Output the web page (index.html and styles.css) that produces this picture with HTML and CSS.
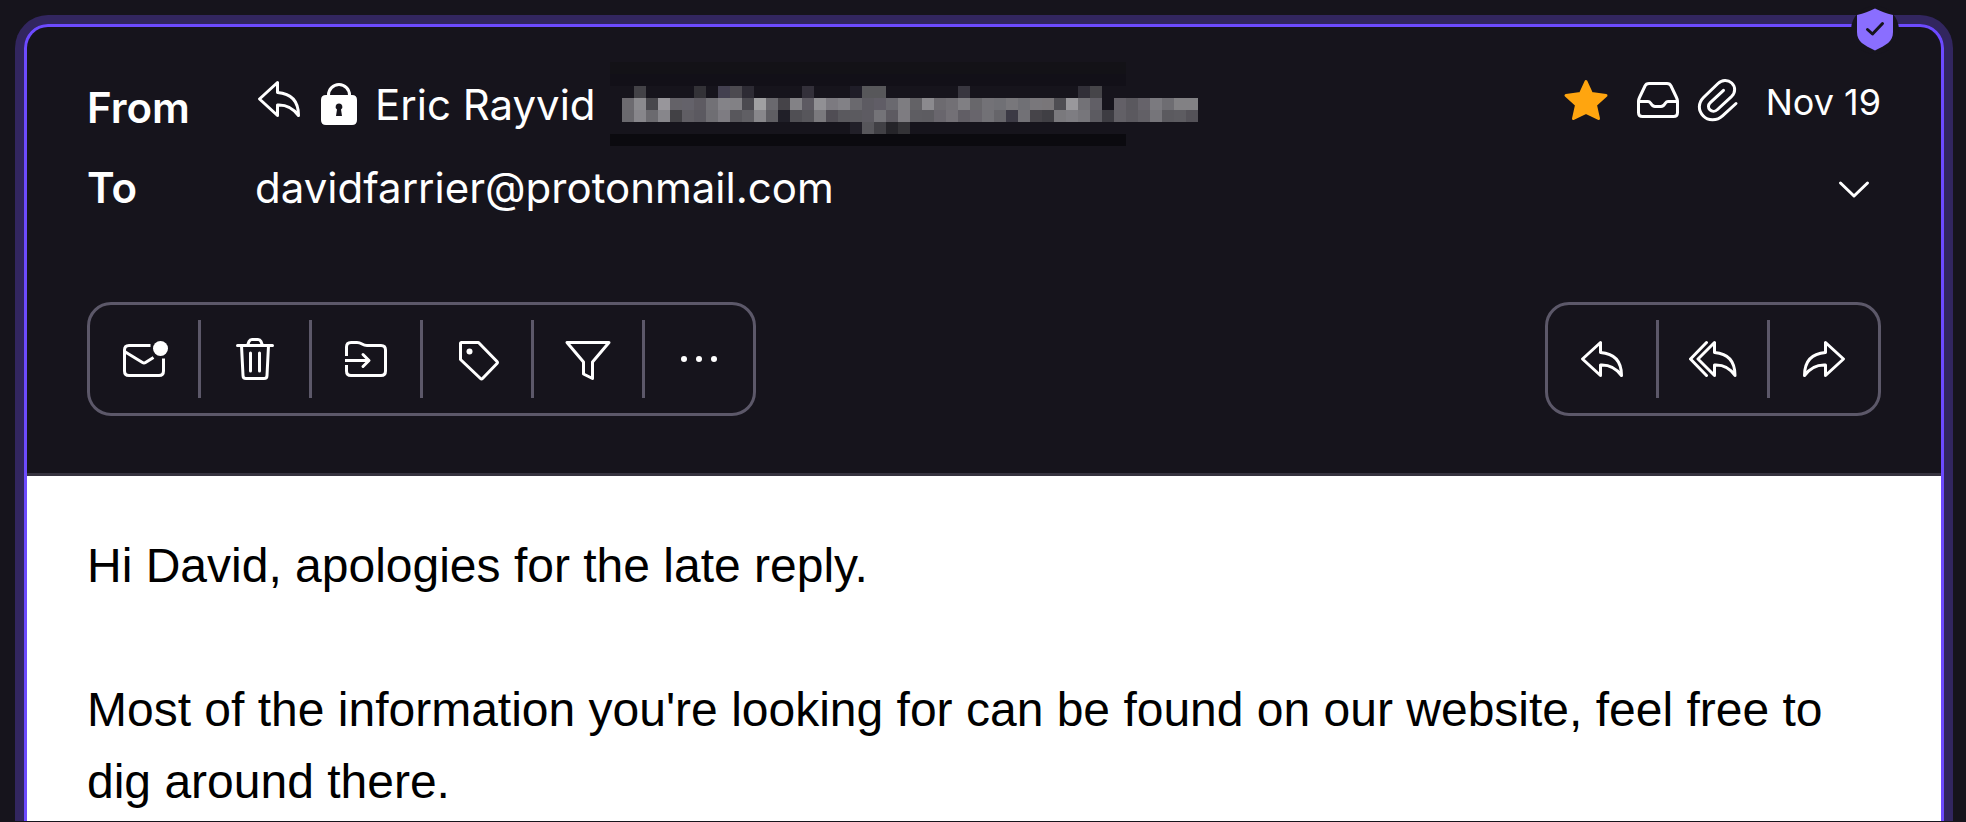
FILE: index.html
```html
<!DOCTYPE html>
<html lang="en">
<head>
<meta charset="utf-8">
<title>Message</title>
<link rel="stylesheet" href="styles.css">
</head>

<body>
<svg class="symbols" aria-hidden="true">
  <symbol id="reply" viewBox="0 0 48 48">
    <path d="M4.5 24 22.5 7.5V17.5C36 18.5 43.5 26 43.5 40.5 38 33 32 29.5 22.5 30v10.5z"/>
  </symbol>
</svg>

<main class="page">
<article class="message">
  <span class="shield">
    <svg viewBox="0 0 48 48" role="img" aria-label="Verified">
      <path class="shield-body" d="M24 2.5C30 5.5 35 7.5 42 9V26C42 36 35 39 24 44.5 13 39 6 36 6 26V9C13 7.5 18 5.5 24 2.5z"/>
      <path class="shield-check" d="M16.5 23.5l5 4.5 10-10.5"/>
    </svg>
  </span>

  <header class="head">
    <div class="row">
      <span class="label">From</span>
      <div class="sender">
        <svg class="icon replied"><use href="#reply"/></svg>
        <svg class="icon" viewBox="0 0 48 48">
          <path d="M13.5 16.5V15a10.5 10.5 0 0 1 21 0v1.5"/>
          <path class="solid" fill-rule="evenodd" d="M11 15H37Q42 15 42 20V40Q42 45 37 45H11Q6 45 6 40V20Q6 15 11 15zM24 23.5a3.3 3.3 0 0 0-2 6L21 36h6l-1-6.5a3.3 3.3 0 0 0-2-6z"/>
        </svg>
        <span class="name">Eric Rayvid</span>
        <svg class="redacted" id="redacted" viewBox="0 0 49 7" aria-hidden="true"></svg>
      </div>
      <div class="meta">
        <button class="plain star" type="button" aria-label="Starred">
          <svg class="icon" viewBox="0 0 48 48"><path d="M24 5.5 29.5 17.5 44 19.5 33.5 29 36.5 42.5 24 36.5 11.5 42.5 14.5 29 4 19.5 18.5 17.5z"/></svg>
        </button>
        <svg class="icon" viewBox="0 0 48 48">
          <path d="M4.5 25.5V36.5Q4.5 40.5 8.5 40.5H39.5Q43.5 40.5 43.5 36.5V25.5Q43.5 23.5 42.5 21.5L37 10Q36 7.5 33 7.5H15Q12 7.5 11 10L5.5 21.5Q4.5 23.5 4.5 25.5z"/>
          <path d="M4.5 25.5H14Q15.5 25.5 16.5 27 18.5 30.5 21 30.5H27Q29.5 30.5 31.5 27 32.5 25.5 34 25.5H43.5"/>
        </svg>
        <svg class="icon" viewBox="0 0 48 48">
          <path d="M42 27.5 28.5 39.8C23 45 14 45 9.3 40 4 34.5 4 27 9.5 21.5L24 7.5C28 3.5 34 3.5 37.7 7 41.7 10.8 41.5 16.5 37.7 20.3L23.5 33.5C21.1 35.8 18 35.8 16 33.9 13.8 31.8 14 28.9 16.3 26.7L29.5 14.3"/>
        </svg>
        <time class="date">Nov 19</time>
      </div>
    </div>

    <div class="row to">
      <span class="label">To</span>
      <span class="address">davidfarrier@protonmail.com</span>
      <button class="plain details" type="button" aria-label="Show details">
        <svg class="icon" viewBox="0 0 48 48"><path d="M10.5 19 24 32 37.5 19"/></svg>
      </button>
    </div>

    <div class="toolbar">
      <div class="group">
        <button type="button" aria-label="Mark as unread">
          <svg class="icon" viewBox="0 0 48 48">
            <path class="flat" d="M30.5 10.5H9Q4.5 10.5 4.5 15V36Q4.5 40.5 9 40.5H39Q43.5 40.5 43.5 36V23.5M4.5 16.5 22.5 27.5Q24 28.5 25.5 27.5L33.5 22.5"/>
            <circle class="solid" cx="40.5" cy="13.5" r="7.5"/>
          </svg>
        </button>
        <button type="button" aria-label="Move to trash">
          <svg class="icon" viewBox="0 0 48 48">
            <path d="M6.5 10.5H41.5M16.5 10.5 18 6.5Q19 4.5 21 4.5H27Q29 4.5 30 6.5L31.5 10.5M10.5 10.5 12 40.5Q12 43.5 15 43.5H33Q36 43.5 36 40.5L37.5 10.5M19.5 18V36M28.5 18V36"/>
          </svg>
        </button>
        <button type="button" aria-label="Move to folder">
          <svg class="icon" viewBox="0 0 48 48">
            <path class="flat" d="M4.5 21V12Q4.5 7.5 9 7.5H15C20 7.5 20 10.5 25 10.5H39Q43.5 10.5 43.5 15V36Q43.5 40.5 39 40.5H9Q4.5 40.5 4.5 36V30M3 25.5H26"/>
            <path d="M21 19.5 27 25.5 21 31.5"/>
          </svg>
        </button>
        <button type="button" aria-label="Label as">
          <svg class="icon" viewBox="0 0 48 48">
            <path d="M7.5 8.5Q7.5 7.5 8.5 7.5H25.5L44 26.5Q45 27.5 44 28.5L29.5 43.5Q28.5 44.5 27.5 43.5L7.5 24.5z"/>
            <circle class="solid" cx="16.5" cy="16.5" r="3"/>
          </svg>
        </button>
        <button type="button" aria-label="Filter on">
          <svg class="icon" viewBox="0 0 48 48"><path d="M3 7.5H45L28.5 27V43.5L19.5 39V27z"/></svg>
        </button>
        <button type="button" aria-label="More">
          <svg class="icon" viewBox="0 0 48 48">
            <circle class="solid" cx="9" cy="24" r="3"/>
            <circle class="solid" cx="24" cy="24" r="3"/>
            <circle class="solid" cx="39" cy="24" r="3"/>
          </svg>
        </button>
      </div>
      <div class="group">
        <button type="button" aria-label="Reply">
          <svg class="icon"><use href="#reply"/></svg>
        </button>
        <button type="button" aria-label="Reply all">
          <svg class="icon" viewBox="0 0 48 48">
            <path d="M17.5 7.5 1.5 24 17.5 40.5M9 24 25.5 7.5V17.5C38.5 18.5 46 26 46 40.5 41 33 35 29.5 25.5 30V40.5z"/>
          </svg>
        </button>
        <button type="button" aria-label="Forward">
          <svg class="icon forward"><use href="#reply"/></svg>
        </button>
      </div>
    </div>
  </header>

  <div class="body">
    <p>Hi David, apologies for the late reply.</p>
    <p>Most of the information you're looking for can be found on our website, feel free to dig around there.</p>
  </div>
</article>
</main>
<script src="redacted.js"></script>
</body>
</html>
```

FILE: styles.css
```css
body{
margin:0;
background:#16141c;
color:#fff;
font-family:Inter,"Liberation Sans",sans-serif;
font-size:42px;
line-height:63px;
}
.symbols{
display:none;
}
.page{
display:flex;
box-sizing:border-box;
min-height:100vh;
padding:24px 22px 0 24px;
border-bottom:1px solid #16141c;
overflow:hidden;
}
.message{
position:relative;
flex:1;
display:flex;
flex-direction:column;
border:3px solid #6d4aff;
border-bottom:0;
border-radius:24px 24px 0 0;
box-shadow:0 0 0 9px #32265f;
}
.shield{
position:absolute;
top:-21px;
right:42px;
width:48px;
height:48px;
border-radius:50%;
background:#16141c;
}
.shield svg{
display:block;
}
.shield-body{
fill:#8a6eff;
}
.shield-check{
fill:none;
stroke:#16141c;
stroke-width:3;
stroke-linecap:round;
stroke-linejoin:round;
}

/* icons */
.icon{
display:block;
flex:none;
width:48px;
height:48px;
fill:none;
stroke:#fff;
stroke-width:3;
stroke-linecap:round;
stroke-linejoin:round;
}
.icon .solid{
fill:#fff;
stroke:none;
}
.icon .flat{
stroke-linecap:butt;
}
.forward{
transform:scaleX(-1);
}
.star .icon{
fill:#ffa50f;
stroke:#ffa50f;
}
button{
margin:0;
padding:0;
border:0;
background:none;
color:inherit;
font:inherit;
cursor:pointer;
}

/* header */
.head{
padding:35px 60px 57px;
border-bottom:3px solid #36333f;
}
.row{
display:flex;
align-items:flex-start;
}
.label{
flex:none;
width:168px;
padding-top:14px;
font-weight:600;
}
.sender{
display:flex;
align-items:center;
gap:12px;
}
.replied{
align-self:flex-start;
margin-top:13px;
}
.name{
white-space:nowrap;
}
.redacted{
flex:none;
width:588px;
height:84px;
margin-left:2px;
}
.meta{
display:flex;
align-items:flex-start;
gap:12px;
margin-left:auto;
padding-top:14px;
}
.star{
margin-right:12px;
}
.date{
margin-left:12px;
font-size:36px;
line-height:52px;
white-space:nowrap;
}
.to{
align-items:center;
padding-top:10px;
}
.to .label{
padding-top:0;
}
.details{
margin-left:auto;
padding-right:3px;
}
.toolbar{
display:flex;
justify-content:space-between;
margin-top:83px;
}
.group{
display:flex;
align-items:center;
border:3px solid #5c5869;
border-radius:24px;
}
.group button{
display:flex;
align-items:center;
justify-content:center;
width:108px;
height:78px;
margin:15px 0;
}
.group button + button{
border-left:3px solid #5c5869;
box-sizing:content-box;
}

/* text of the mail */
.body{
flex:1;
padding:54px 60px 0;
background:#fff;
color:#000;
font-family:"Liberation Sans",Arial,sans-serif;
font-size:48px;
line-height:72px;
}
.body p{
margin:0;
}
.body p + p{
margin-top:72px;
}
```

FILE: redacted.js
```javascript
// grey blocks over the sender's address, one colour per cell, "-" is empty
var rows = [
  "- 434247 - - - - 333237 - 434050 4c4a50 2d2b34 - - - - 33303a - - - 1f1d28 57575a 57575a - - - - - - 38363f - - - - - - - - - 312f38 464549",
  "6d6b70 8b8a8e 48474c 98969b 646268 64626a 5e5b62 727176 848388 828185 4b4a50 a0a0a2 6a696e 454348 838286 5d5a62 919094 7c7a80 828186 6a696e 5d5b62 605d66 6a696f 7e7d81 636266 8b8a8e 6d6b70 727075 807f83 68676b 737277 707075 78777b 707075 79777b 797679 4f4e53 99989c 737277 615f66 - 636067 5a585e 66636a 7b7a7f 6e6d72 828184 828184",
  "6a696e 87868b 6b6a6f 87868b 424145 605e64 5b5960 6f6e73 7e7c82 58575c 605f64 88878b 5f5e63 201f28 504f54 57565b 7a797d 504d54 5a595e 5b5a5f 5d5b62 747378 5d5a61 7e7c81 5e5d62 5d5c61 69666d 737076 615e65 68656c 727176 66656a 3c3a45 727176 464449 403f44 7a797d 7e7d82 77767b 5c5b61 3d3c42 626066 5b595f 626066 76757a 5b5a5f 5d5c61 545258",
  "- - - - - - - - - - - - - - - - - - - 211f28 57565b 414045 252429 333236"
];
var svg = document.getElementById("redacted");

function block(x, y, w, h, color) {
  var r = document.createElementNS("http://www.w3.org/2000/svg", "rect");
  r.setAttribute("x", x);
  r.setAttribute("y", y);
  r.setAttribute("width", w);
  r.setAttribute("height", h);
  r.setAttribute("fill", "#" + color);
  r.setAttribute("shape-rendering", "crispEdges");
  svg.appendChild(r);
}

block(0, 0, 43, 1, "131217");
block(0, 1, 43, 1, "121018");
block(0, 6, 43, 1, "0b0a0f");
rows.forEach(function (row, y) {
  row.split(" ").forEach(function (color, x) {
    if (color !== "-") block(x + 1, y + 2, 1, 1, color);
  });
});
```
